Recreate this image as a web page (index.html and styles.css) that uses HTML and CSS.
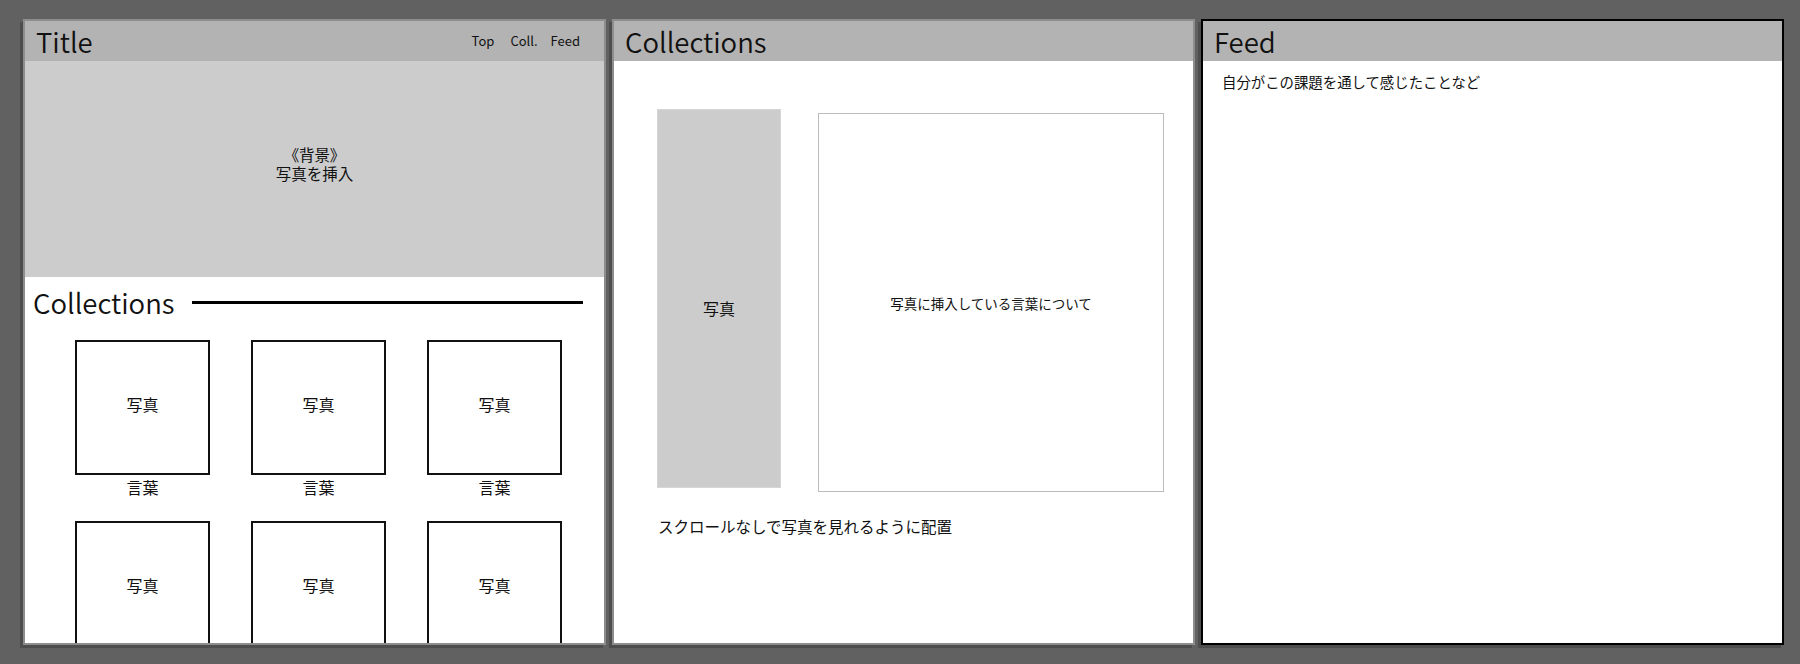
FILE: index.html
```html
<!DOCTYPE html>
<html lang="ja">
<head>
<meta charset="utf-8">
<title>Wireframe</title>
<link rel="stylesheet" href="styles.css">
</head>
<body>
<div class="desk">
  <section class="panel">
    <header class="bar">
      <h1 class="bar-title">Title</h1>
      <nav class="nav"><span class="nav-item nav-first">Top</span><span class="nav-item">Coll.</span><span class="nav-item">Feed</span></nav>
    </header>
    <div class="hero">
      <p class="hero-text"><span class="hero-line bracket">《背景》</span><span class="hero-line">写真を挿入</span></p>
    </div>
    <div class="coll">
      <div class="coll-head"><h2 class="coll-title">Collections</h2><span class="rule"></span></div>
      <div class="grid">
        <figure class="item"><div class="photo">写真</div><figcaption class="caption">言葉</figcaption></figure>
        <figure class="item"><div class="photo">写真</div><figcaption class="caption">言葉</figcaption></figure>
        <figure class="item"><div class="photo">写真</div><figcaption class="caption">言葉</figcaption></figure>
        <figure class="item"><div class="photo">写真</div><figcaption class="caption">言葉</figcaption></figure>
        <figure class="item"><div class="photo">写真</div><figcaption class="caption">言葉</figcaption></figure>
        <figure class="item"><div class="photo">写真</div><figcaption class="caption">言葉</figcaption></figure>
      </div>
    </div>
  </section>

  <section class="panel">
    <header class="bar">
      <h1 class="bar-title">Collections</h1>
    </header>
    <div class="detail">
      <div class="showcase">
        <div class="shot">写真</div>
        <div class="words">写真に挿入している言葉について</div>
      </div>
      <p class="note">スクロールなしで写真を見れるように配置</p>
    </div>
  </section>

  <section class="panel panel-active">
    <header class="bar">
      <h1 class="bar-title">Feed</h1>
    </header>
    <div class="feed">
      <p class="feed-text">自分がこの課題を通して感じたことなど</p>
    </div>
  </section>
</div>
</body>
</html>
```

FILE: styles.css
```css
* { box-sizing: border-box; }

html, body {
  margin: 0;
  height: 664px;
  overflow: hidden;
}

body {
  background: #616161;
  color: #111;
  font-family: "Noto Sans CJK JP", "Noto Sans", sans-serif;
}

.desk {
  display: flex;
  gap: 6px;
  padding: 19px 0 0 23px;
}

.panel {
  width: 583px;
  height: 626px;
  flex: none;
  display: flex;
  flex-direction: column;
  background: #fff;
  border: 2px solid #8d8d8d;
  overflow: hidden;
  box-shadow: -3px 3px 0 rgba(0, 0, 0, 0.2);
}

.panel-active {
  border-color: #000;
}

.bar {
  height: 40px;
  flex: none;
  display: flex;
  justify-content: space-between;
  align-items: flex-start;
  padding: 0 24px 0 11px;
  background: #b3b3b3;
}

.bar-title {
  margin: 0;
  font-size: 27.5px;
  font-weight: 350;
  line-height: 40px;
  color: #111;
}

.nav {
  display: flex;
  gap: 13px;
  margin-top: 10px;
  font-size: 13px;
  line-height: 20px;
}

.nav-first {
  margin-right: 3px;
}

.hero {
  height: 216px;
  flex: none;
  display: flex;
  align-items: center;
  justify-content: center;
  padding-bottom: 11px;
  background: #cccccc;
}

.hero-text {
  margin: 0;
  display: flex;
  flex-direction: column;
  align-items: center;
  font-size: 15.5px;
}

.hero-line {
  display: block;
  height: 19px;
  line-height: 19px;
}

.bracket {
  font-feature-settings: "palt";
}

.coll {
  padding: 5px 21px 0 8px;
}

.coll-head {
  display: flex;
  align-items: flex-start;
}

.coll-title {
  margin: 0;
  font-size: 27.5px;
  font-weight: 350;
  line-height: 40px;
}

.rule {
  flex: 1;
  height: 3px;
  margin: 19px 0 0 17px;
  background: #000;
}

.grid {
  display: grid;
  grid-template-columns: repeat(3, 135px);
  column-gap: 41px;
  row-gap: 24px;
  margin: 18px 0 0 42px;
}

.item {
  margin: 0;
}

.photo {
  width: 135px;
  height: 135px;
  display: flex;
  align-items: center;
  justify-content: center;
  padding-bottom: 8px;
  border: 2px solid #111;
  font-size: 16px;
}

.caption {
  margin-top: 2px;
  text-align: center;
  font-size: 16px;
  line-height: 20px;
}

.detail {
  padding: 48px 29px 0 43px;
}

.showcase {
  display: flex;
  align-items: flex-start;
  gap: 37px;
}

.shot {
  width: 124px;
  height: 379px;
  display: flex;
  align-items: center;
  justify-content: center;
  padding-top: 18px;
  background: #cccccc;
  border: 1px solid #d6d6d6;
  font-size: 16px;
}

.words {
  width: 346px;
  height: 379px;
  margin-top: 4px;
  display: flex;
  align-items: center;
  justify-content: center;
  border: 1px solid #bcbcbc;
  font-size: 13.5px;
}

.note {
  margin: 24px 0 0 1px;
  font-size: 15.5px;
  line-height: 20px;
}

.feed {
  padding: 11px 18px 0 19px;
}

.feed-text {
  margin: 0;
  font-size: 14.4px;
  line-height: 20px;
}
```
